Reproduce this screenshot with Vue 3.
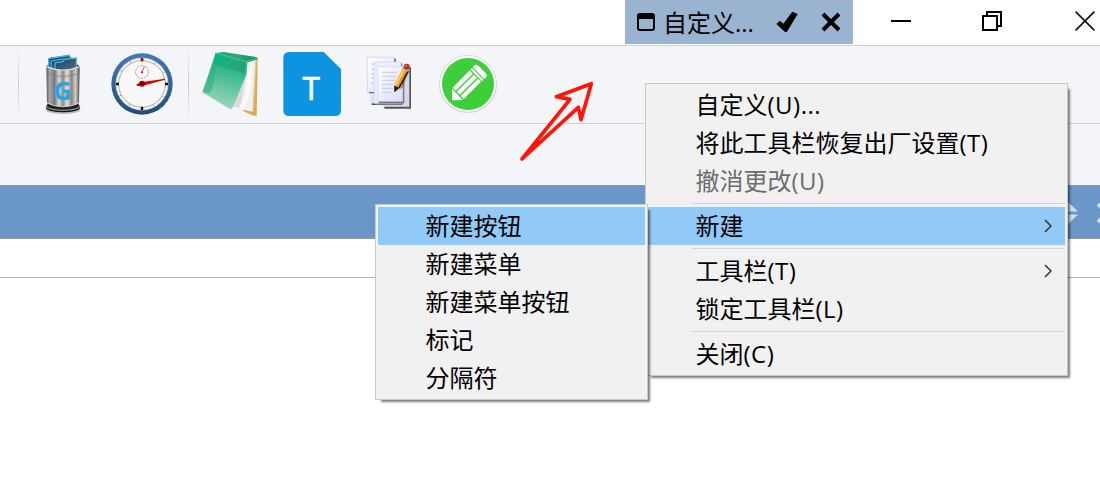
<script setup>
import { ref } from 'vue';

// 主菜单
const mainMenu = [
  { id: 1, text: '自定义', suffix: '(U)...' },
  { id: 2, text: '将此工具栏恢复出厂设置', suffix: '(T)' },
  { id: 3, text: '撤消更改', suffix: '(U)', disabled: true },
  { id: 4, separator: true },
  { id: 5, text: '新建', arrow: true },
  { id: 6, separator: true },
  { id: 7, text: '工具栏', suffix: '(T)', arrow: true },
  { id: 8, text: '锁定工具栏', suffix: '(L)' },
  { id: 9, separator: true },
  { id: 10, text: '关闭', suffix: '(C)' },
];

// “新建”子菜单
const subMenu = [
  { id: 1, text: '新建按钮' },
  { id: 2, text: '新建菜单' },
  { id: 3, text: '新建菜单按钮' },
  { id: 4, text: '标记' },
  { id: 5, text: '分隔符' },
];

const activeMain = ref(5);
const activeSub = ref(1);
</script>

<template>
  <div class="window">
    <header class="titlebar">
      <div class="custom-tab">
        <svg class="tab-icon" width="18" height="18" viewBox="0 0 18 18">
          <rect x="1" y="1" width="16" height="16" rx="2" fill="none" stroke="#000" stroke-width="2" />
          <rect x="1" y="1" width="16" height="5" fill="#000" />
        </svg>
        <span class="tab-text">自定义<span class="dots">...</span></span>
        <svg class="tab-check" width="22" height="22" viewBox="0 0 66 66">
          <path d="M1 39 L12 29 L22 38 L49 2 L65 9 L33 62 L27 63 Z" fill="#000" />
        </svg>
        <svg class="tab-close" width="20" height="20" viewBox="0 0 20 20">
          <path d="M2 2 L18 18 M18 2 L2 18" stroke="#000" stroke-width="4" />
        </svg>
      </div>
      <div class="controls">
        <svg width="20" height="20" viewBox="0 0 20 20">
          <rect y="9" width="20" height="2" />
        </svg>
        <svg width="20" height="20" viewBox="0 0 20 20" fill="none" stroke="#000" stroke-width="2">
          <path d="M5 4 V1 H19 V15 H16" />
          <rect x="1" y="5" width="14" height="14" />
        </svg>
        <svg width="20" height="20" viewBox="0 0 20 20" stroke="#111" stroke-width="1.6">
          <path d="M0.6 0.6 L19.4 19.4 M19.4 0.6 L0.6 19.4" />
        </svg>
      </div>
    </header>

    <div class="toolbar">
      <i class="split"></i>

      <!-- 垃圾桶 -->
      <svg class="tool trash" viewBox="93 36 192 192">
        <defs>
          <linearGradient id="metal">
            <stop offset="0" stop-color="#555" />
            <stop offset="0.1" stop-color="#a8a8a8" />
            <stop offset="0.25" stop-color="#777" />
            <stop offset="0.38" stop-color="#d8d8d8" />
            <stop offset="0.5" stop-color="#8b8b8b" />
            <stop offset="0.62" stop-color="#e6e3df" />
            <stop offset="0.76" stop-color="#8a8580" />
            <stop offset="0.88" stop-color="#d0d0d0" />
            <stop offset="1" stop-color="#444" />
          </linearGradient>
          <linearGradient id="folder" x2="1" y2="1">
            <stop offset="0" stop-color="#1d4059" />
            <stop offset="1" stop-color="#48708e" />
          </linearGradient>
        </defs>
        <ellipse cx="189" cy="209" rx="52" ry="13" fill="#b9bbbd" />
        <ellipse cx="189" cy="203" rx="51" ry="14" fill="#181818" />
        <ellipse cx="189" cy="199" rx="51" ry="13" fill="#aaa" />
        <ellipse cx="189" cy="197" rx="49" ry="12" fill="#222" />
        <ellipse cx="189" cy="80" rx="49" ry="13" fill="#333" />
        <path d="M145 55 L207 45 L214 53 L214 94 L153 96 Z" fill="url(#folder)" />
        <path d="M146 90 V56 L207 46 L210 52" fill="none" stroke="#36b4ee" stroke-width="4" />
        <path d="M154 64 L190 58 L229 53 V88 L162 94 Z" fill="url(#folder)" />
        <path d="M154 90 V63 L190 57 M165 94 V68 L189 65 L193 58 L229 54 V84" fill="none" stroke="#45bff2" stroke-width="3.5" />
        <path d="M139 80 Q189 101 239 80 L237 190 Q189 213 141 190 Z" fill="url(#metal)" />
        <path d="M139 80 Q189 101 239 80" fill="none" stroke="#ddd" stroke-width="4" />
        <path d="M140 100 Q189 119 238 100" fill="none" stroke="#777" stroke-width="2" />
        <path d="M141 189 Q189 211 237 189" fill="none" stroke="#ccc" stroke-width="3" />
        <text class="letter-g" x="188" y="179">G</text>
      </svg>

      <!-- 时钟 -->
      <svg class="tool clock" viewBox="330 36 192 192">
        <defs>
          <linearGradient id="rim" x2="0" y2="1">
            <stop offset="0" stop-color="#4279b8" />
            <stop offset="1" stop-color="#234c79" />
          </linearGradient>
        </defs>
        <circle cx="426" cy="132" r="92" fill="url(#rim)" />
        <circle cx="426" cy="132" r="78" fill="#f8f8f8" stroke="#dce5ef" stroke-width="2" />
        <circle cx="426" cy="132" r="70" fill="none" stroke="#aaa" stroke-width="3" />
        <circle cx="426" cy="132" r="74" fill="none" stroke="#555" stroke-width="5" stroke-dasharray="1.5 37.25" />
        <circle cx="426" cy="96" r="19" fill="none" stroke="#777" stroke-width="2.5" stroke-dasharray="3 2" />
        <path d="M426 54 V64" stroke="#b00000" stroke-width="8" />
        <path d="M426 200 V210 M348 132 H357 M495 132 H504" stroke="#111" stroke-width="7" />
        <path d="M425 99 L433 80" stroke="#d33" stroke-width="2.5" />
        <circle cx="426" cy="97" r="3" fill="#b00" />
        <path d="M409 133 L424 127 L495 116 L495 119 L429 137 L412 138 Z" fill="#d00000" />
        <circle cx="426" cy="131" r="9" fill="#b00000" />
        <circle cx="426" cy="131" r="4" fill="#3a0505" />
      </svg>

      <i class="split second"></i>

      <!-- 记事本 -->
      <svg class="tool notebook" viewBox="39 36 192 192">
        <defs>
          <linearGradient id="cover" x1="0.6" x2="0.4" y2="1">
            <stop offset="0" stop-color="#0aa777" />
            <stop offset="0.45" stop-color="#4cbf95" />
            <stop offset="1" stop-color="#a2d9c0" />
          </linearGradient>
          <linearGradient id="spine">
            <stop offset="0" stop-color="#0bb184" />
            <stop offset="0.5" stop-color="#2aa87b" />
            <stop offset="1" stop-color="#0c9668" />
          </linearGradient>
        </defs>
        <path d="M213 56 L218 54 L215 226 L207 228 L174 213 Z" fill="#d8a950" />
        <path d="M185 65 L213 56 L203 215 L142 203 Z" fill="#f0f0f2" />
        <path d="M185 95 L166 203 L141 200 Z" fill="#d8dadd" />
        <path d="M188 100 Q186 170 162 204 L178 208 Q202 150 202 70 Z" fill="#fcfcfd" />
        <path d="M213 59 L204 215" stroke="#e8c68a" stroke-width="4" />
        <path d="M91 41 L187 66 L185 101 L142 205 Q139 209 133 206 L52 157 Z" fill="url(#cover)" />
        <path d="M91 67 Q93 125 75 160 L52 155 L84 76 Z" fill="#22ad7e" opacity="0.5" />
        <path d="M91 39 L117 36 L217 52 L217 58 L184 68 L182 101 L91 74 Z" fill="url(#spine)" />
        <path d="M91 39 L184 65 L216 54 M184 65 L182 100" fill="none" stroke="#71d1ad" stroke-width="2" />
      </svg>

      <!-- 文本文件 -->
      <svg class="tool text-file" viewBox="285 36 192 192">
        <path d="M313 36 H416 L468 87 V210 Q468 228 450 228 H313 Q295 228 295 210 V54 Q295 36 313 36 Z" fill="#0c94e1" />
        <text class="letter-t" x="378.5" y="181">T</text>
      </svg>

      <!-- 文档与铅笔 -->
      <svg class="tool pages" viewBox="24 36 192 192">
        <defs>
          <linearGradient id="paper" x2="1" y2="1">
            <stop offset="0" stop-color="#fff" />
            <stop offset="1" stop-color="#d9dbf6" />
          </linearGradient>
        </defs>
        <path d="M57 56 H137 V160 H57 Z" fill="#444" />
        <path d="M52 52 H132 V156 H52 Z" fill="url(#paper)" stroke="#c9caf0" stroke-width="2" />
        <path d="M65 72 H75 M65 87 H75 M65 101 H75 M65 115 H75 M65 129 H75" stroke="#c6c8ee" stroke-width="4" />
        <path d="M103 82 H183 V206 H103 Z" fill="#555" />
        <path d="M99 79 H178 V200 H99 Z" fill="#d7d8e8" />
        <path d="M65 160 H157 V195 H65 Z" fill="#555" />
        <path d="M61 160 H80 V190 H61 Z" fill="#dfe0f9" />
        <path d="M77 70 H157 V195 H77 Z" fill="#777" />
        <path d="M73 66 H153 V190 H73 Z" fill="#eceefd" stroke="#d3d5f2" stroke-width="2" />
        <path d="M86 84 H163 V190 H86 Z" fill="#777" />
        <path d="M83 80 H158 V184 H83 Z" fill="url(#paper)" stroke="#cfd0f1" stroke-width="2" />
        <path d="M96 97 H140 M96 109 H140 M96 121 H138 M96 133 H130 M96 145 H130 M96 157 H124" stroke="#cdd0f6" stroke-width="4" />
        <path d="M181 80 L159 142 L137 158 L150 147 L176 87" fill="#555" opacity="0.55" />
        <path d="M159 85 L177 91 L149 143 L133 156 V136 Z" fill="#e99b24" />
        <path d="M162 90 L137 137" stroke="#ffd85e" stroke-width="5" />
        <path d="M175 93 L147 144" stroke="#3b2108" stroke-width="5" />
        <path d="M133 137 L148 144 L133 157 Z" fill="#151515" />
        <path d="M161 85 L176 92" stroke="#bcc5dc" stroke-width="7" />
        <circle cx="170" cy="80" r="9" fill="#c82a20" />
        <circle cx="168" cy="77" r="3" fill="#f07c68" />
      </svg>

      <!-- 编辑 -->
      <svg class="tool edit" viewBox="258 36 192 192">
        <circle cx="354" cy="132" r="87" fill="#d2d4d6" />
        <circle cx="354" cy="131" r="84" fill="#fff" />
        <circle cx="354" cy="132" r="78" fill="#3dce3c" />
        <g fill="#fff">
          <path d="M306 146 L338 180 L306 181 Z" />
          <path d="M308 143 L359 91 L369 101 L317 152 Z" />
          <path d="M320 155 L372 104 L381 113 L329 164 Z" />
          <path d="M332 167 L384 116 L393 125 L341 177 Z" />
          <path d="M361 88 L366 84 L401 119 L396 124 Z" />
          <path d="M368 81 L373 76 Q379 71 386 78 L407 99 Q414 106 408 112 L403 117 Z" />
        </g>
      </svg>
    </div>

    <div class="blank-row"></div>

    <div class="panel-head">
      <svg class="sorter" width="20" height="24" viewBox="0 0 20 24" fill="#d0def0">
        <path d="M10 1 L20 10.5 H0 Z M0 13.5 H20 L10 23 Z" />
      </svg>
      <svg class="panel-close" width="20" height="20" viewBox="0 0 20 20">
        <path d="M1 1 L19 19 M19 1 L1 19" stroke="#d0def0" stroke-width="4" />
      </svg>
    </div>
    <div class="panel-row"></div>

    <!-- 红色箭头标注 -->
    <svg class="pointer" width="140" height="100" viewBox="0 0 420 300">
      <path d="M36 267 L180 88 L139 80 L244 41 L213 149 L205 112 Z" fill="none" stroke="#ff1408" stroke-width="11" stroke-linejoin="round" />
    </svg>

    <ul class="menu main-menu">
      <li
        v-for="item in mainMenu"
        :key="item.id"
        :class="{ separator: item.separator, item: !item.separator, active: item.id === activeMain, disabled: item.disabled }"
      >
        <span v-if="item.text" class="label">{{ item.text }}<span class="latin">{{ item.suffix }}</span></span>
        <svg v-if="item.arrow" class="arrow" width="8" height="14" viewBox="0 0 8 14">
          <path d="M1 1 L7 7 L1 13" fill="none" stroke="#333" stroke-width="1.5" />
        </svg>
      </li>
    </ul>

    <ul class="menu sub-menu">
      <li v-for="item in subMenu" :key="item.id" class="item" :class="{ active: item.id === activeSub }">
        <span class="label">{{ item.text }}</span>
      </li>
    </ul>
  </div>
</template>

<style>
body {
  margin: 0;
  overflow: hidden;
}
</style>

<style scoped>
.window {
  position: relative;
  width: 1100px;
  height: 481px;
  overflow: hidden;
  background: #fff;
  font-family: "Noto Sans CJK SC", sans-serif;
  font-size: 24px;
  color: #000;
}

svg {
  display: block;
  flex-shrink: 0;
}

.latin,
.dots {
  font-family: "Open Sans", "Noto Sans", sans-serif;
}

.latin {
  letter-spacing: 0.5px;
}

/* --- 标题栏 --- */
.titlebar {
  box-sizing: border-box;
  height: 46px;
  padding-left: 625px;
  display: flex;
  border-bottom: 1px solid #cfcfcf;
}

.custom-tab {
  box-sizing: border-box;
  width: 228px;
  height: 44px;
  padding-left: 12px;
  display: flex;
  align-items: center;
  background: #9ab3d0;
}

.tab-text {
  width: 113px;
  margin-left: 8px;
  line-height: 44px;
  white-space: nowrap;
}

.tab-close {
  margin-left: 23px;
}

.controls {
  display: flex;
  gap: 71px;
  padding: 11px 0 0 38px;
}

.controls svg:last-child {
  margin-left: 2px;
}

/* --- 工具栏 --- */
.toolbar {
  box-sizing: border-box;
  height: 78px;
  padding-left: 18px;
  display: flex;
  align-items: flex-start;
  background: #f4f5f8;
  border-bottom: 1px solid #cfd0d2;
}

.split {
  width: 1px;
  height: 72px;
  margin-top: 2px;
  background: linear-gradient(#f4f5f8, #ccc 50%, #f4f5f8);
}

.split.second {
  margin-left: 14px;
}

.tool {
  width: 64px;
  height: 64px;
  margin-top: 6px;
}

.trash { margin-left: 12px; }
.clock { margin-left: 15px; }
.notebook { margin-left: 9px; }
.text-file { margin-left: 18px; }
.pages { margin-left: 14px; }
.edit { margin-left: 14px; }

.letter-g {
  font: 700 75px "Open Sans", sans-serif;
  fill: #26a4e6;
  text-anchor: middle;
}

.letter-t {
  font: 400 92px Inter, sans-serif;
  fill: #fff;
  stroke: #fff;
  stroke-width: 1.5px;
  text-anchor: middle;
}

.blank-row {
  height: 61px;
  background: #f4f5f8;
}

/* --- 面板 --- */
.panel-head {
  box-sizing: border-box;
  height: 54px;
  padding: 1px 0 0 1058px;
  display: flex;
  align-items: center;
  background: #6b97c8;
  border-top: 1px solid #8b9aab;
  border-bottom: 1px solid #999;
}

.panel-close {
  margin-left: 19px;
}

.panel-row {
  height: 38px;
  border-bottom: 1px solid #b4b4b4;
}

.pointer {
  position: absolute;
  left: 510px;
  top: 70px;
}

/* --- 弹出菜单 --- */
.menu {
  position: absolute;
  box-sizing: border-box;
  margin: 0;
  padding: 2px;
  list-style: none;
  background: #f1f1f1;
  border: 1px solid #c9c9c9;
  box-shadow: 4px 4px 2px -2px rgba(0, 0, 0, 0.5);
}

.main-menu {
  left: 645px;
  top: 83px;
  width: 423px;
}

.sub-menu {
  left: 375px;
  top: 204px;
  width: 273px;
}

.item {
  height: 38px;
  padding: 0 13px 0 47.5px;
  display: flex;
  align-items: center;
  justify-content: space-between;
  white-space: nowrap;
}

.label {
  margin-bottom: 2px;
  line-height: 36px;
}

.item.active {
  background: #91c9f7;
}

.item.disabled {
  color: #6d6d6d;
}

.separator {
  height: 1px;
  margin: 3px 0 3px 44px;
  background: #d5d5d5;
}
</style>
